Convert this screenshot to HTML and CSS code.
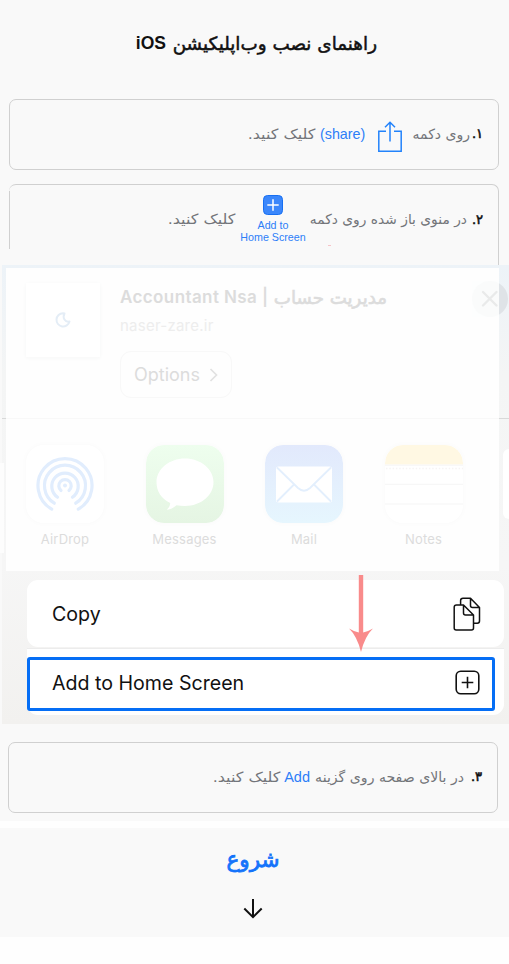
FILE: index.html
```
<!DOCTYPE html>
<html lang="fa">
<head>
<meta charset="utf-8">
<title>راهنمای نصب</title>
<link rel="stylesheet" href="styles.css">
</head>
<body>
<main class="page" dir="rtl">
  <h1 class="title"><span class="fa t-title">راهنمای نصب وب‌اپلیکیشن</span><span class="ios" dir="ltr">iOS</span></h1>

  <section class="card card-one">
    <b class="num">۱.</b><span class="fa t-one">روی دکمه</span>
    <svg class="share" width="26" height="32" viewBox="0 0 26 32" fill="none" stroke="#2383fb" stroke-width="1.5"><path d="M9 10.200H1.800v20.100h22.400V10.200H17M13 20.500V1.600M8 6.200l5-4.900 5 4.900"/></svg>
    <span class="blue share-word" dir="ltr">(share)</span><span class="fa t-click">کلیک کنید.</span>
  </section>

  <section class="card card-two">
    <b class="num">۲.</b><span class="fa t-two">در منوی باز شده روی دکمه</span>
    <span class="home" dir="ltr">
      <svg width="20" height="20" viewBox="0 0 20 20"><rect x=".5" y=".5" width="19" height="19" rx="4" fill="#3b87fb" stroke="#176ff2"/><path d="M10 4.300v11.400M4.300 10h11.400" stroke="#fff" stroke-width="1.500"/></svg>
      <span>Add to<br>Home Screen</span>
    </span>
    <span class="fa t-click">کلیک کنید.</span>
    <i class="speck"></i>
  </section>

  <section class="sheet" dir="ltr">
    <div class="panel">
      <div class="preview">
        <div class="thumb"><svg width="16" height="16" viewBox="0 0 16 16" fill="none" stroke="#e4edf6" stroke-width="2"><path d="M8 1.300A6.600 6.600 0 1 0 14.500 9.500C10 10.500 7.200 6 9.500 1.500Z" stroke-linejoin="round"/></svg></div>
        <div class="info">
          <div class="name"><span class="name-en">Accountant Nsa |</span><span class="fa name-fa" dir="rtl">مدیریت حساب</span></div>
          <div class="site">naser-zare.ir</div>
          <div class="options"><span>Options</span><svg width="9" height="14" viewBox="0 0 9 14" fill="none" stroke="#e2e2e2" stroke-width="1.700"><path d="M1.500 1l6 6-6 6"/></svg></div>
        </div>
      </div>
      <div class="apps">
        <div class="app"><svg class="tile" width="78" height="78" viewBox="0 0 78 78" fill="none"><rect width="78" height="78" rx="18" fill="#fff"/><g stroke="#e1edfd" stroke-width="3.200" stroke-linecap="round"><path d="M25.700 64.100A27 27 0 1 1 52.300 64.100"/><path d="M28.300 58.200A20.500 20.500 0 1 1 49.700 58.200"/><path d="M31.600 52.200A13.200 13.200 0 1 1 46.400 52.200"/><path d="M35 45.500A6.200 6.200 0 1 1 43 45.500"/></g><circle cx="39" cy="40.500" r="2" fill="#e1edfd"/></svg><span>AirDrop</span></div>
        <div class="app"><svg class="tile" width="78" height="78" viewBox="0 0 78 78"><defs><linearGradient id="g" x2="0" y2="1"><stop stop-color="#eefeee"/><stop offset="1" stop-color="#e5f5e3"/></linearGradient></defs><rect width="78" height="78" rx="18" fill="url(#g)"/><path d="M39 13.500c16 0 28.500 10.700 28.500 23.800S55 61 39 61q-4.500 0-8.500-.8-4.500 4-9.800 4.500 3.300-2.700 3.500-6.800C15.500 54 10.500 46.500 10.500 37.300 10.500 24.200 23 13.500 39 13.500Z" fill="#fff"/></svg><span>Messages</span></div>
        <div class="app"><svg class="tile" width="78" height="78" viewBox="0 0 78 78" fill="none"><defs><linearGradient id="m" x2="0" y2="1"><stop stop-color="#e2e9fc"/><stop offset="1" stop-color="#e6f6fe"/></linearGradient></defs><rect width="78" height="78" rx="18" fill="url(#m)"/><rect x="11" y="21.500" width="56" height="36" rx="2.500" fill="#fff"/><path d="M12 22.500 33 43Q39 48.500 45 43L66 22.500M12 56.500 29 39.500M66 56.500 49 39.500" stroke="#e3effd" stroke-width="1.800"/></svg><span>Mail</span></div>
        <div class="app"><svg class="tile" width="78" height="78" viewBox="0 0 78 78" fill="none"><rect width="78" height="78" rx="18" fill="#fff"/><path d="M0 19.500V18A18 18 0 0 1 18 0H60A18 18 0 0 1 78 18v1.500Z" fill="#fff8e3"/><path d="M0 20.200H78M0 39.300H78M0 59H78" stroke="#f5f5f5"/><path d="M1 23.500H78" stroke="#f6f4f4" stroke-width="1.500" stroke-dasharray="1.500 1.800"/></svg><span>Notes</span></div>
      </div>
    </div>
    <svg class="close" width="36" height="36" viewBox="0 0 36 36"><circle cx="18" cy="18" r="18" fill="#dfe3e7"/><path d="M0 0H27V36H0Z" fill="#fdfefe"/><path d="M27 2.400A18 18 0 1 0 27 33.600Z" fill="#fafbfb"/><path d="m11 11 13.500 13.500M24.500 11 11 24.500" stroke="#e9eaea" stroke-width="2.400" stroke-linecap="round"/></svg>
    <i class="edge-left"></i><i class="edge-right"></i><i class="rule-left"></i><i class="rule-right"></i>
    <div class="actions">
      <div class="action copy"><span>Copy</span>
        <svg width="28" height="34" viewBox="0 0 28 34" fill="none" stroke="#111" stroke-width="1.500" stroke-linejoin="round"><path d="M7.600 8V3.500Q7.600 1.200 10 1.200H17.500L26.500 10.500V24Q26.500 26.200 24.300 26.200H21M17.500 1.500V8.500Q17.500 10.500 19.500 10.500H26.500M3.500 8H10.500L20.500 18V31Q20.500 33 18.500 33H3.200Q1.200 33 1.200 31V10.200Q1.200 8 3.500 8ZM10.500 8V16Q10.500 18 12.500 18H20.500"/></svg>
      </div>
      <div class="action add"><div class="focus"><span>Add to Home Screen</span>
        <svg width="25" height="25" viewBox="0 0 25 25" fill="none" stroke="#111" stroke-width="1.600"><rect x="1.200" y="1.200" width="22.600" height="22.600" rx="4.500"/><path d="M12.500 6.700v11.600M6.700 12.500h11.600"/></svg></div>
      </div>
    </div>
    <svg class="pointer" width="26" height="78" viewBox="0 0 26 78" fill="#f98b8b"><path d="M10.800 0h4.400V57.500Q20 56.500 25 53.500 17 61 13 77 9 61 1 53.500 6 56.500 10.800 57.500Z"/></svg>
  </section>

  <section class="card card-three">
    <b class="num">۳.</b><span class="fa t-three">در بالای صفحه روی گزینه</span><span class="blue add-word">Add</span><span class="fa t-click">کلیک کنید.</span>
  </section>

  <footer class="start"><span class="fa t-start">شروع</span>
    <svg width="20" height="20" viewBox="0 0 20 20" fill="none" stroke="#111" stroke-width="2"><path d="M10 0v18M1.300 9.500 10 18.200l8.700-8.700"/></svg>
  </footer>
</main>
</body>
</html>
```
FILE: styles.css
```
* { box-sizing: border-box; }
body { margin: 0; background: #fefefe; font-family: Inter, "Liberation Sans", sans-serif; }
.page { width: 509px; height: 964px; overflow: hidden; background: linear-gradient(#f9f9f9 821px, #fefefe 821px, #fefefe 828px, #f9f9f9 828px, #f9f9f9 937px, #fefefe 937px); }
.fa, .num { font-family: "DejaVu Sans", sans-serif; font-weight: 400; white-space: nowrap; flex: none; }
.title { height: 99px; margin: 0; padding: 0 132px 12px 0; display: flex; align-items: center; gap: 7px; font-size: 17px; color: #111; }
.t-title { width: 204px; font-size: 18.350px; -webkit-text-stroke: .5px #111; }
.ios { font-family: "Liberation Sans", sans-serif; font-size: 17.500px; }
.card { width: 490px; height: 71px; margin-right: 10px; padding: 0 15px 2px 0; border: 1px solid #d0d0d0; border-radius: 7px; display: flex; align-items: center; color: #73757a; font-size: 14px; }
.num { width: 12px; color: #111; font-size: 13px; -webkit-text-stroke: .6px #111; margin-left: 4px; }
.card-one .num { width: 9px; }
.card-three .num { width: 13px; margin-left: 5px; }
.t-one { width: 57px; }
.t-two { width: 157px; font-size: 13.800px; }
.t-three { width: 149px; font-size: 14.100px; }
.t-click { width: 59.400px; transform: scaleX(1.14); transform-origin: right; }
.share { margin: 6px 10px 0 12px; flex: none; }
.blue { color: #2d7ef8; font-family: "Liberation Sans", sans-serif; flex: none; }
.share-word { width: 45px; margin-left: 5px; font-size: 14.300px; }
.add-word { width: 25px; margin: 0 5px 0 5px; font-size: 14.500px; }
.card-two { position: relative; height: 81px; margin-top: 14px; border-bottom: 0; border-left: 0; border-radius: 7px 7px 0 0; background: linear-gradient(#d0d0d0, #d0d0d0) left 6px / 1px 58px no-repeat; padding-bottom: 12px; }
.speck { position: absolute; left: 319px; top: 60px; width: 3px; height: 1px; background: #f6c4c8; }
.home { width: 66px; flex: none; margin: -8px 4px 0 5px; display: flex; flex-direction: column; align-items: center; color: #2d7ef8; font: 10.700px/12px "Liberation Sans", sans-serif; text-align: center; white-space: nowrap; gap: 4px; padding-top: 8px; }
.sheet { position: relative; width: 507px; height: 459px; padding: 3px 0 0 4px; background: linear-gradient(#edf3f8, #f4f5f5 110px, #f6f6f6 300px, #f2f1ef); }
.panel { width: 493px; height: 303px; background: #fefefe; }
.preview { height: 151px; border-bottom: 1px solid #f8f8f8; padding: 15px 0 0 20px; display: flex; gap: 20px; }
.thumb { width: 74px; height: 74px; background: #fff; box-shadow: 0 1px 4px #f6f7f7; display: grid; place-items: center; }
.info { display: flex; flex-direction: column; }
.name { display: flex; gap: 5px; height: 28px; align-items: center; color: #dcdcdc; font-weight: 600; font-size: 17px; }
.name-en { width: 149px; letter-spacing: .4px; white-space: nowrap; }
.name-fa { width: 113px; font-size: 18.200px; -webkit-text-stroke: .6px #dcdcdc; }
.site { height: 30px; line-height: 30px; color: #ededed; font-size: 15px; letter-spacing: .25px; }
.options { margin-top: 10px; width: 112px; height: 47px; border: 1px solid #f8f8f8; border-radius: 11px; display: flex; align-items: center; justify-content: center; gap: 9px; color: #dcdcdc; font-size: 18px; }
.apps { display: flex; gap: 41.500px; padding: 26px 0 0 20px; }
.app { width: 78px; flex: none; display: flex; flex-direction: column; align-items: center; gap: 7px; color: #dcdcdc; font-size: 13px; letter-spacing: .2px; line-height: 18px; }
.tile { border-radius: 18px; box-shadow: 0 0 6px #fafafa; }
.close { position: absolute; left: 470px; top: 16px; }
.edge-left { position: absolute; left: -2px; top: 198px; width: 4px; height: 90px; background: #fdfdfd; }
.edge-right { position: absolute; left: 501px; top: 184px; width: 6px; height: 70px; background: #fff; border-radius: 6px 0 0 6px; }
.rule-left, .rule-right { position: absolute; top: 153px; height: 1px; background: #d8d9d9; }
.rule-left { left: 0; width: 4px; }
.rule-right { left: 497px; width: 10px; }
.actions { margin: 9px 0 0 21px; width: 477px; color: #111; font-size: 19.600px; }
.action { background: #fff; }
.copy { height: 67px; border-radius: 11px; padding: 0 23px 0 25px; display: flex; align-items: center; justify-content: space-between; }
.add { height: 67px; margin-top: 1px; border-top: 1px solid #ececec; padding-top: 8px; border-radius: 0 0 11px 11px; }
.focus { width: 468px; height: 54px; border: 3px solid #056ef5; border-radius: 3px; display: flex; justify-content: space-between; align-items: center; padding: 0 12px 3px 22px; }
.pointer { position: absolute; left: 346px; top: 310px; }
.card-three { margin: 18px 11px 0 0; }
.start { height: 110px; margin-top: 15px; padding: 12px 0 0 3px; display: flex; flex-direction: column; align-items: center; transform: translateX(-3px); }
.t-start { height: 59px; line-height: 40px; color: #1473fb; -webkit-text-stroke: .8px #1473fb; font-size: 21.500px; }
```
